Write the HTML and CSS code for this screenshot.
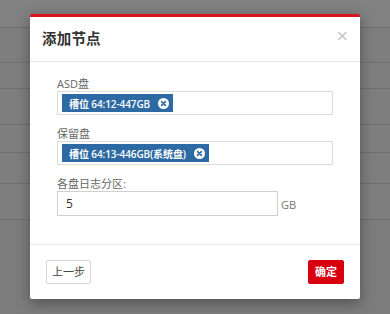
FILE: index.html
```html
<!DOCTYPE html>
<html lang="zh">
<head>
<meta charset="utf-8">
<link rel="stylesheet" href="styles.css">
</head>
<body>
<div class="bg">
  <div class="bg-row r1"></div>
  <div class="bg-row r2"></div>
  <div class="bg-row r3"></div>
  <div class="bg-row r4"></div>
  <div class="bg-row r5"></div>
  <div class="bg-row r6"></div>
  <div class="bg-row r7"></div>
</div>
<div class="modal">
  <div class="modal-header">
    <h4 class="title">添加节点</h4>
    <span class="close">&times;</span>
  </div>
  <div class="modal-body">
    <div class="group">
      <label class="label">ASD盘</label>
      <div class="select">
        <span class="tag">槽位 64:12-447GB<svg class="tag-x" width="11" height="11" viewBox="0 0 11 11"><circle cx="5.5" cy="5.5" r="5.5" fill="#fff"/><path d="M3.6 3.6 L7.4 7.4 M7.4 3.6 L3.6 7.4" stroke="#2d6aa3" stroke-width="1.6" stroke-linecap="round"/></svg></span>
      </div>
    </div>
    <div class="group">
      <label class="label">保留盘</label>
      <div class="select">
        <span class="tag">槽位 64:13-446GB(系统盘)<svg class="tag-x" width="11" height="11" viewBox="0 0 11 11"><circle cx="5.5" cy="5.5" r="5.5" fill="#fff"/><path d="M3.6 3.6 L7.4 7.4 M7.4 3.6 L3.6 7.4" stroke="#2d6aa3" stroke-width="1.6" stroke-linecap="round"/></svg></span>
      </div>
    </div>
    <div class="group last">
      <label class="label">各盘日志分区:</label>
      <div class="input-row">
        <div class="input">5</div>
        <span class="unit">GB</span>
      </div>
    </div>
  </div>
  <div class="modal-footer">
    <button class="btn btn-default">上一步</button>
    <button class="btn btn-primary">确定</button>
  </div>
</div>
</body>
</html>
```

FILE: styles.css
```css
* { box-sizing: border-box; }
html, body {
  margin: 0;
  padding: 0;
  width: 390px;
  height: 314px;
  overflow: hidden;
  background: #7c7c7c;
  font-family: "Open Sans", "Noto Sans CJK SC", sans-serif;
}
.bg { display: flex; flex-direction: column; }
.bg-row { border-bottom: 1px solid #6f6f6f; background: #7e7e7e; }
.r1 { height: 28px; background: #818181; }
.r2 { height: 35px; }
.r3 { height: 26px; background: #7f7f7f; }
.r4 { height: 36px; }
.r5 { height: 28px; background: #7f7f7f; }
.r6 { height: 31px; }
.r7 { height: 36px; background: #7f7f7f; }

.modal {
  position: absolute;
  left: 30px;
  top: 14px;
  width: 330px;
  background: #fff;
  border-top: 3px solid #d7141e;
  border-radius: 2px;
  box-shadow: 0 4px 14px rgba(0,0,0,0.35);
}
.modal-header {
  height: 45px;
  border-bottom: 1px solid #e8e8e8;
  display: flex;
  align-items: center;
  justify-content: space-between;
  padding: 0 12px 3px 12px;
}
.title {
  margin: 0;
  font-size: 14.5px;
  font-weight: bold;
  color: #333;
  letter-spacing: 0.2px;
}
.close {
  font-size: 20px;
  color: #c4c4c4;
  line-height: 1;
  margin-top: -4px;
  margin-right: 0;
}
.modal-body {
  padding: 15px 27px 28px 27px;
}
.group { margin-bottom: 12px; }
.group.last { margin-bottom: 0; }
.label {
  display: block;
  font-size: 11px;
  line-height: 14px;
  color: #666;
}
.select {
  width: 276px;
  height: 24px;
  border: 1px solid #dcdcdc;
  padding: 2px 4px;
  display: flex;
  align-items: center;
}
.tag {
  display: inline-flex;
  align-items: center;
  height: 18px;
  background: #2d6aa3;
  color: #fff;
  font-size: 10px;
  font-weight: 600;
  letter-spacing: -0.1px;
  padding: 0 4px 0 7px;
  white-space: nowrap;
}
.tag-x { margin-left: 8px; }
.input-row { display: flex; align-items: center; }
.input {
  width: 221px;
  height: 25px;
  border: 1px solid #cfcfcf;
  padding: 0 8px;
  font-size: 12px;
  line-height: 23px;
  color: #333;
}
.unit {
  font-size: 11px;
  color: #777;
  margin-left: 3px;
  padding-top: 1px;
}
.modal-footer {
  border-top: 1px solid #e8e8e8;
  padding: 15px 16px 15px 16px;
  display: flex;
  justify-content: space-between;
}
.btn {
  height: 24px;
  border-radius: 2px;
  font-family: "Open Sans", "Noto Sans CJK SC", sans-serif;
  font-size: 11px;
  padding: 0;
  line-height: 22px;
}
.btn-default {
  width: 45px;
  background: #fff;
  border: 1px solid #d6d6d6;
  color: #444;
}
.btn-primary {
  width: 36px;
  background: #d9000f;
  border: 1px solid #d9000f;
  color: #fff;
  font-weight: 600;
}
```
